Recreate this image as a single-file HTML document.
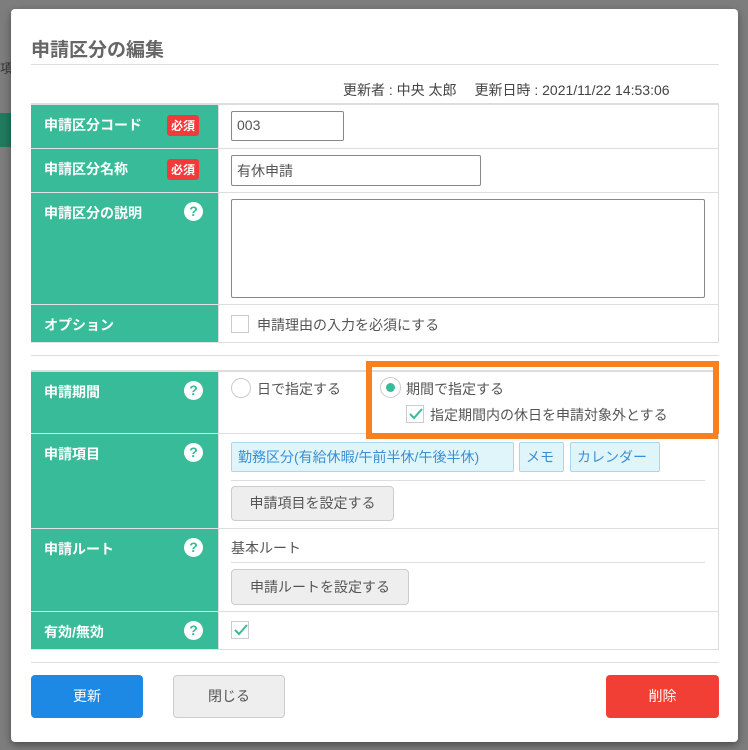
<!DOCTYPE html>
<html><head><meta charset="utf-8"><style>
*{box-sizing:border-box;margin:0;padding:0}
body{width:748px;height:750px;background:#7d7d7d;font-family:"Liberation Sans","Noto Sans CJK JP",sans-serif;position:relative;overflow:hidden;color:#444}
.a{position:absolute}
#dlg{left:11px;top:9px;width:727px;height:733px;background:#fff;border-radius:4px;box-shadow:0 3px 8px rgba(0,0,0,.4)}
.lab{position:absolute;left:31px;width:187px;background:#38bb99;color:#fff;font-size:14px;font-weight:bold;padding:10px 0 0 13px;border-bottom:1px solid #e3e3e3}
.cell{position:absolute;left:218px;width:501px;border-bottom:1px solid #ddd;border-right:1px solid #ddd;border-left:1px solid #ddd}
.req{position:absolute;left:136px;top:10px;background:#f23a3a;color:#fff;font-size:12px;border-radius:3px;padding:2px 4px;font-weight:bold}
.q{position:absolute;left:153px;top:9px;width:19px;height:19px;border-radius:50%;background:#fff;color:#38bb99;font-size:14px;font-weight:bold;text-align:center;line-height:19px}
.inp{position:absolute;border:1px solid #888;border-radius:2px;background:#fff;font-size:14px;color:#555;padding:6px 5px}
.tag{position:absolute;top:442px;height:30px;background:#e0f5fa;border:1px solid #a8d8ea;border-radius:2px;color:#3a8fd4;font-size:14px;line-height:28px;padding:0 6px}
.btn{position:absolute;background:#eee;border:1px solid #ccc;border-radius:4px;font-size:14px;color:#555;text-align:center}
.t{position:absolute;font-size:14px;color:#555}
.chk{position:absolute;width:18px;height:18px;border:1px solid #ccc;background:#fff}
</style></head><body>
<div class="a" style="left:0;top:58px;width:11px;height:22px;color:#333;font-size:13px;overflow:hidden">項</div>
<div class="a" style="left:0;top:113px;width:11px;height:34px;background:#1f7a5e"></div>
<div id="dlg" class="a"></div>
<div class="a" style="left:31px;top:35px;font-size:19px;font-weight:bold;color:#666">申請区分の編集</div>
<div class="a" style="left:31px;top:64px;width:688px;height:1px;background:#ddd"></div>
<div class="t" style="left:343px;top:80px;font-size:14px;color:#444">更新者 : 中央 太郎　 更新日時 : 2021/11/22 14:53:06</div>
<div class="a" style="left:31px;top:103px;width:688px;height:2px;background:#ddd"></div>

<div class="lab" style="top:105px;height:44px">申請区分コード<span class="req">必須</span></div>
<div class="cell" style="top:105px;height:44px"></div>
<div class="inp" style="left:231px;top:111px;width:113px;height:30px;padding:5px">003</div>

<div class="lab" style="top:149px;height:44px">申請区分名称<span class="req">必須</span></div>
<div class="cell" style="top:149px;height:44px"></div>
<div class="inp" style="left:231px;top:155px;width:250px;height:31px;padding:5px">有休申請</div>

<div class="lab" style="top:193px;height:112px">申請区分の説明<span class="q">?</span></div>
<div class="cell" style="top:193px;height:112px"></div>
<div class="inp" style="left:231px;top:199px;width:474px;height:99px"></div>

<div class="lab" style="top:305px;height:38px">オプション</div>
<div class="cell" style="top:305px;height:38px"></div>
<div class="chk" style="left:231px;top:315px"></div>
<div class="t" style="left:257px;top:315px">申請理由の入力を必須にする</div>

<div class="a" style="left:31px;top:355px;width:688px;height:1px;background:#ddd"></div>
<div class="a" style="left:31px;top:370px;width:688px;height:2px;background:#ddd"></div>

<div class="lab" style="top:372px;height:62px">申請期間<span class="q">?</span></div>
<div class="cell" style="top:372px;height:62px"></div>
<div class="a" style="left:231px;top:378px;width:20px;height:20px;border:1px solid #ccc;border-radius:50%"></div>
<div class="t" style="left:257px;top:379px">日で指定する</div>
<div class="a" style="left:366px;top:361px;width:353px;height:78px;border:6px solid #f8811f"></div>
<div class="a" style="left:380px;top:377px;width:21px;height:21px;border:1px solid #ccc;border-radius:50%"></div>
<div class="a" style="left:386px;top:383px;width:9px;height:9px;background:#38bb99;border-radius:50%"></div>
<div class="t" style="left:406px;top:379px">期間で指定する</div>
<div class="chk" style="left:406px;top:405px"></div>
<svg class="a" style="left:408px;top:407px" width="16" height="14"><path d="M2 7l4 4 8-9" stroke="#38bb99" stroke-width="2" fill="none"/></svg>
<div class="t" style="left:430px;top:405px">指定期間内の休日を申請対象外とする</div>

<div class="lab" style="top:434px;height:95px">申請項目<span class="q">?</span></div>
<div class="cell" style="top:434px;height:95px"></div>
<div class="tag" style="left:231px;width:283px">勤務区分(有給休暇/午前半休/午後半休)</div>
<div class="tag" style="left:519px;width:45px">メモ</div>
<div class="tag" style="left:570px;width:90px">カレンダー</div>
<div class="a" style="left:231px;top:480px;width:474px;height:1px;background:#ddd"></div>
<div class="btn" style="left:231px;top:486px;width:163px;height:35px;line-height:33px">申請項目を設定する</div>

<div class="lab" style="top:529px;height:83px">申請ルート<span class="q">?</span></div>
<div class="cell" style="top:529px;height:83px"></div>
<div class="t" style="left:231px;top:538px">基本ルート</div>
<div class="a" style="left:231px;top:562px;width:474px;height:1px;background:#ddd"></div>
<div class="btn" style="left:231px;top:569px;width:178px;height:36px;line-height:34px">申請ルートを設定する</div>

<div class="lab" style="top:612px;height:38px">有効/無効<span class="q">?</span></div>
<div class="cell" style="top:612px;height:38px"></div>
<div class="chk" style="left:231px;top:621px"></div>
<svg class="a" style="left:233px;top:623px" width="16" height="14"><path d="M2 7l4 4 8-9" stroke="#38bb99" stroke-width="2" fill="none"/></svg>

<div class="a" style="left:31px;top:662px;width:688px;height:1px;background:#ddd"></div>
<div class="btn" style="left:31px;top:675px;width:112px;height:43px;line-height:41px;background:#1e88e5;border-color:#1e88e5;color:#fff">更新</div>
<div class="btn" style="left:173px;top:675px;width:112px;height:43px;line-height:41px">閉じる</div>
<div class="btn" style="left:606px;top:675px;width:113px;height:43px;line-height:41px;background:#f23f35;border-color:#f23f35;color:#fff">削除</div>
</body></html>
